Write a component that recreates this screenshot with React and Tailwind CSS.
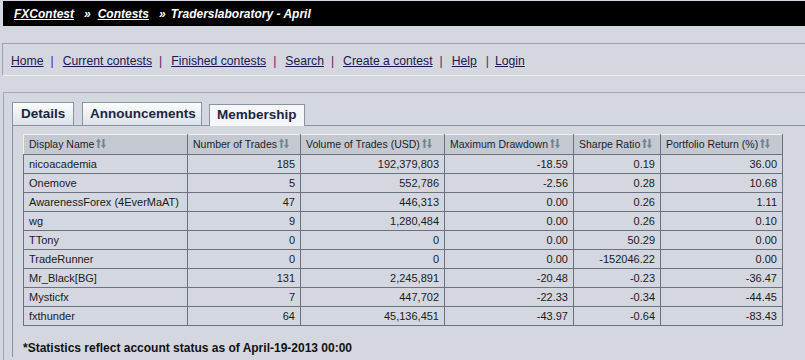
import React from 'react'

const rows = [
  ['nicoacademia', '185', '192,379,803', '-18.59', '0.19', '36.00'],
  ['Onemove', '5', '552,786', '-2.56', '0.28', '10.68'],
  ['AwarenessForex (4EverMaAT)', '47', '446,313', '0.00', '0.26', '1.11'],
  ['wg', '9', '1,280,484', '0.00', '0.26', '0.10'],
  ['TTony', '0', '0', '0.00', '50.29', '0.00'],
  ['TradeRunner', '0', '0', '0.00', '-152046.22', '0.00'],
  ['Mr_Black[BG]', '131', '2,245,891', '-20.48', '-0.23', '-36.47'],
  ['Mysticfx', '7', '447,702', '-22.33', '-0.34', '-44.45'],
  ['fxthunder', '64', '45,136,451', '-43.97', '-0.64', '-83.43'],
]

const cols = [
  { name: 'Display Name', w: 'w-[164px]' },
  { name: 'Number of Trades', w: 'w-[113px]' },
  { name: 'Volume of Trades (USD)', w: 'w-[144px]' },
  { name: 'Maximum Drawdown', w: 'w-[129px]' },
  { name: 'Sharpe Ratio', w: 'w-[87px]' },
  { name: 'Portfolio Return (%)', w: 'w-[122px]' },
]

const SortIcon = () => (
  <svg width="10" height="11" viewBox="0 0 10 11" className="inline-block ml-[2px] -mt-[3px] align-middle">
    <path d="M2.5 0.5 L0 4 H1.5 V10 H3.5 V4 H5 Z" fill="#6f8890" />
    <path d="M7.5 10.5 L10 7 H8.5 V1 H6.5 V7 H5 Z" fill="#6f8890" />
  </svg>
)

const navLinks = ['Home', 'Current contests', 'Finished contests', 'Search', 'Create a contest', 'Help', 'Login']

const App = () => {
  return (
    <div className="w-[805px] h-[360px] overflow-hidden bg-[#d4d7df] font-['Liberation_Sans',Arial,sans-serif] text-[#1a1a1a]">
      {/* title bar */}
      <div className="mt-[1px] ml-[3px] h-[25px] bg-black flex items-center pl-[11px] text-white font-bold italic text-[12px]">
        <span className="underline">FXContest</span>
        <span className="ml-[10px] mr-[7px]">»</span>
        <span className="underline">Contests</span>
        <span className="ml-[10px] mr-[5px]">»</span>
        <span>Traderslaboratory - April</span>
      </div>

      {/* nav */}
      <div className="mt-[17px] ml-[2px] h-[33px] border-t border-l border-b border-t-[#9ea2ad] border-l-[#9ea2ad] border-b-[#eceef3] flex items-center pl-[8px] pt-[3px] text-[12.2px]">
        {navLinks.map((l, i) => (
          <React.Fragment key={l}>
            <span className="underline text-[#1c1850]">{l}</span>
            {i < navLinks.length - 1 && (
              <span className={`${l === 'Help' ? 'ml-[9px] mr-[6px]' : 'ml-[7px] mr-[9px]'} text-[#5a2068]`}>|</span>
            )}
          </React.Fragment>
        ))}
      </div>

      {/* content panel */}
      <div className="mt-[16px] ml-[3px] h-[300px] border-t border-l border-[#a2a6b0] pl-[8px] pt-[9px]">
        <div className="flex items-end h-[23px] text-[13.5px] font-bold text-[#1c2640]">
          <div className="h-[23px] w-[62px] border border-b-0 border-[#8a93a0] bg-gradient-to-b from-[#fbfcfd] to-[#dde3e8] flex items-center pl-[8px]">Details</div>
          <div className="ml-[8px] h-[23px] w-[120px] border border-b-0 border-[#8a93a0] bg-gradient-to-b from-[#fbfcfd] to-[#dde3e8] flex items-center pl-[7px]">Announcements</div>
          <div className="ml-[7px] h-[22px] w-[96px] border border-b-0 border-[#8a93a0] bg-[#f4f6f8] flex items-center pl-[7px] relative top-[1px] z-10">Membership</div>
        </div>
        <div className="border-t border-l border-[#8a93a0] pl-[10px] pt-[8px]">
          <table className="border-collapse text-[11px] table-fixed">
            <thead>
              <tr className="h-[20px] bg-[#c4c8d1]">
                {cols.map((c, i) => (
                  <th
                    key={c.name}
                    className={`${c.w} border border-[#6c7282] border-t-[#eef0f4] ${i === 0 ? 'border-l-[#eef0f4]' : ''} text-left font-normal text-[10.5px] pl-[5px] text-[#1a1e2a] whitespace-nowrap`}
                  >
                    {c.name}
                    <SortIcon />
                  </th>
                ))}
              </tr>
            </thead>
            <tbody>
              {rows.map((r) => (
                <tr key={r[0]} className="h-[19px]">
                  {r.map((v, j) => (
                    <td
                      key={j}
                      className={`border border-[#6c7282] whitespace-nowrap ${j === 0 ? 'text-left pl-[5px]' : 'text-right pr-[5px]'}`}
                    >
                      {v}
                    </td>
                  ))}
                </tr>
              ))}
            </tbody>
          </table>
          <div className="mt-[13px] text-[12px] font-bold text-[#111]">*Statistics reflect account status as of April-19-2013 00:00</div>
        </div>
      </div>
    </div>
  )
}

export default App
